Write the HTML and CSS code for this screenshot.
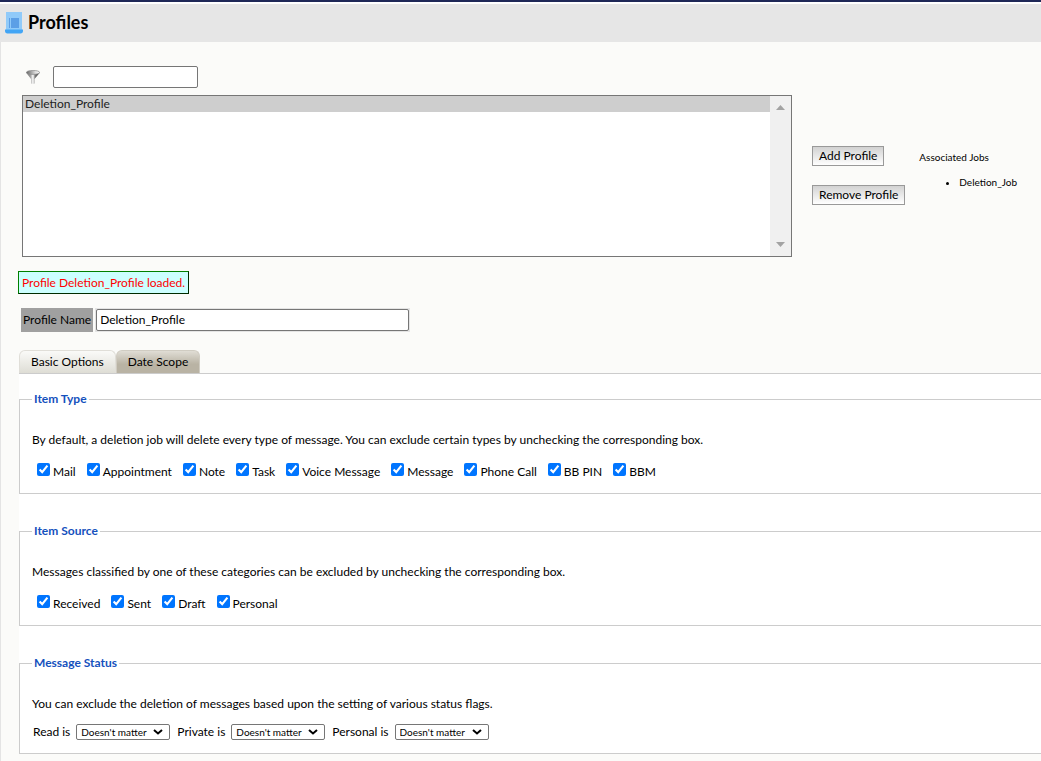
FILE: index.html
```html
<!DOCTYPE html>
<html lang="en">
<head>
<meta charset="utf-8">
<title>Profiles</title>
<link rel="stylesheet" href="styles.css">
</head>
<body>
<header class="page-header">
  <svg class="page-icon" viewBox="0 0 18 22" aria-hidden="true">
    <path fill="#90caf9" d="M1 0h16v18H1z"/>
    <path fill="#5c9fe6" d="M4 6h10v10H4z"/>
    <path fill="#90caf9" d="M5 6h1v10H5z"/>
    <path fill="#42a5f5" d="M0 17.500h18v1.500a2.500 2.500 0 0 1-2 2.500H2A2.500 2.500 0 0 1 0 19z"/>
  </svg>
  <h1 class="page-title">Profiles</h1>
</header>
<main class="page">
  <div class="filter">
    <svg class="filter-icon" viewBox="0 0 14 14" aria-hidden="true">
      <defs>
        <linearGradient id="metal"><stop offset="0" stop-color="#777"/><stop offset=".3" stop-color="#999"/><stop offset=".5" stop-color="#fff"/><stop offset=".65" stop-color="#777"/><stop offset="1" stop-color="#444"/></linearGradient>
        <linearGradient id="bowl"><stop offset="0" stop-color="#666"/><stop offset=".7" stop-color="#ddd"/><stop offset="1" stop-color="#fff"/></linearGradient>
      </defs>
      <path fill="url(#metal)" d="M0 2.500 5 9v4.500q1.800.8 3.500 0V9L14 2.500z"/>
      <ellipse cx="7" cy="2.400" rx="6.600" ry="2" fill="url(#bowl)" stroke="#888" stroke-width=".7"/>
    </svg>
    <input class="filter-input" type="text" aria-label="Filter profiles">
  </div>
  <div class="profiles">
    <div class="listbox">
      <select class="list" size="10" aria-label="Profiles">
        <option selected>Deletion_Profile</option>
      </select>
      <div class="scroll" aria-hidden="true">
        <svg class="arrow" viewBox="0 0 9 5"><path d="M0 5 4.500 0 9 5z"/></svg>
        <svg class="arrow" viewBox="0 0 9 5"><path d="M0 0 4.500 5 9 0z"/></svg>
      </div>
    </div>
    <div class="actions">
      <button class="btn" type="button">Add Profile</button>
      <button class="btn" type="button">Remove Profile</button>
    </div>
    <div class="jobs">
      <p class="jobs-title">Associated Jobs</p>
      <ul class="jobs-list"><li>Deletion_Job</li></ul>
    </div>
  </div>
  <p class="notice" role="status">Profile Deletion_Profile loaded.</p>
  <div class="name-row">
    <label class="name-label" for="name">Profile Name</label>
    <span class="name-field"><input class="name-input" id="name" type="text" value="Deletion_Profile"></span>
  </div>
  <div class="tabs" role="tablist">
    <button class="tab tab-active" type="button" role="tab" aria-selected="true">Basic Options</button>
    <button class="tab" type="button" role="tab" aria-selected="false">Date Scope</button>
  </div>
  <div class="panel" role="tabpanel">
    <fieldset class="group">
      <legend class="legend">Item Type</legend>
      <p class="text">By default, a deletion job will delete every type of message. You can exclude certain types by unchecking the corresponding box.</p>
      <div class="checks">
        <label class="check"><input type="checkbox" checked><span>Mail</span></label>
        <label class="check"><input type="checkbox" checked><span>Appointment</span></label>
        <label class="check"><input type="checkbox" checked><span>Note</span></label>
        <label class="check"><input type="checkbox" checked><span>Task</span></label>
        <label class="check"><input type="checkbox" checked><span>Voice Message</span></label>
        <label class="check"><input type="checkbox" checked><span>Message</span></label>
        <label class="check"><input type="checkbox" checked><span>Phone Call</span></label>
        <label class="check"><input type="checkbox" checked><span>BB PIN</span></label>
        <label class="check"><input type="checkbox" checked><span>BBM</span></label>
      </div>
    </fieldset>
    <fieldset class="group">
      <legend class="legend">Item Source</legend>
      <p class="text">Messages classified by one of these categories can be excluded by unchecking the corresponding box.</p>
      <div class="checks">
        <label class="check"><input type="checkbox" checked><span>Received</span></label>
        <label class="check"><input type="checkbox" checked><span>Sent</span></label>
        <label class="check"><input type="checkbox" checked><span>Draft</span></label>
        <label class="check"><input type="checkbox" checked><span>Personal</span></label>
      </div>
    </fieldset>
    <fieldset class="group">
      <legend class="legend">Message Status</legend>
      <p class="text">You can exclude the deletion of messages based upon the setting of various status flags.</p>
      <div class="flags">
        <label class="flag">Read is <span class="choice"><select class="choice-select"><option>Doesn't matter</option></select><svg class="chevron" viewBox="0 0 10 6" aria-hidden="true"><path d="m1 1 4 3.500L9 1"/></svg></span></label>
        <label class="flag">Private is <span class="choice"><select class="choice-select"><option>Doesn't matter</option></select><svg class="chevron" viewBox="0 0 10 6" aria-hidden="true"><path d="m1 1 4 3.500L9 1"/></svg></span></label>
        <label class="flag">Personal is <span class="choice"><select class="choice-select"><option>Doesn't matter</option></select><svg class="chevron" viewBox="0 0 10 6" aria-hidden="true"><path d="m1 1 4 3.500L9 1"/></svg></span></label>
      </div>
    </fieldset>
  </div>
</main>
</body>
</html>
```
FILE: styles.css
```css
* { box-sizing: border-box; }
body {
  display: flex;
  flex-direction: column;
  min-height: 100vh;
  margin: 0;
  border-top: 2px solid #1f2857;
  background: #fbfbf9;
  color: #000;
  font: 12px/16px Lato, "Liberation Sans", sans-serif;
}
button, input, select { font: inherit; color: inherit; }
p { margin: 0; }
.page-header {
  display: flex;
  align-items: center;
  gap: 5px;
  height: 40px;
  padding-left: 5px;
  border-top: 2px solid #fff;
  background: #e6e6e6;
}
.page-icon { width: 18px; height: 22px; }
.page-title { margin: 0; padding-bottom: 2px; font-size: 18px; line-height: 24px; font-weight: 700; }
.page { flex: 1; padding: 24px 0 0 18px; border-left: 1px solid #e4e4e4; }
.filter { display: flex; align-items: center; gap: 13px; padding-left: 7px; }
.filter-icon { width: 14px; height: 14px; }
.filter-input {
  width: 145px;
  height: 22px;
  padding: 1px 4px;
  border: 1px solid #767676;
  border-radius: 2px;
  background: #fff;
}
.profiles { display: flex; align-items: flex-start; margin-top: 7px; padding-left: 3px; }
.listbox {
  display: flex;
  flex: 0 1 770px;
  height: 162px;
  border: 1px solid #767676;
  background: #fff;
}
.list { flex: 1; min-width: 0; padding: 0; border: 0; border-radius: 0; outline: 0; background: #fff; overflow: hidden; }
.list option { min-height: 16px; padding: 0 2px; line-height: 16px; color: #222; }
.list option:checked { background: linear-gradient(#cecece, #cecece); color: #222; }
.scroll {
  display: flex;
  flex-direction: column;
  justify-content: space-between;
  align-items: center;
  width: 21px;
  padding: 9px 0;
  background: #f0f0f0;
}
.arrow { width: 9px; height: 5px; fill: #a3a3a3; }
.actions { display: flex; flex-direction: column; align-items: flex-start; gap: 19px; margin: 51px 0 0 20px; }
.btn {
  height: 20px;
  padding: 0 6px;
  border: 1px solid #999;
  background: linear-gradient(#d2d2d2, #fff);
  line-height: 16px;
  white-space: nowrap;
}
.jobs { margin: 54px 0 0 14px; font-size: 10px; white-space: nowrap; }
.jobs-list { margin: 9px 0 0; padding-left: 40px; }
.notice {
  width: fit-content;
  margin: 14px 0 0 -1px;
  padding: 3px;
  border: 1px outset green;
  background: #cff;
  color: #f00;
  line-height: 15px;
}
.name-row { display: flex; margin: 14px 0 0 2px; gap: 2px; }
.name-label { height: 24px; padding: 0 2px; background: #a0a0a0; line-height: 24px; }
.name-field { padding: 1px; background: #e4e4e4; }
.name-input {
  display: block;
  width: 313px;
  height: 22px;
  padding: 0 3px 1px;
  border: 1px solid #767676;
  border-radius: 2px;
  background: #fff;
}
.tabs { display: flex; margin-top: 18px; border-bottom: 1px solid #ccc; }
.tab {
  height: 23px;
  padding: 0 11px;
  border: 1px solid #d0ccc2;
  border-bottom: 0;
  border-radius: 6px 6px 0 0;
  background: linear-gradient(#e0ddd5, #b9b3a4 60%);
}
.tab-active { border-color: #e0ded8; background: linear-gradient(#fafaf8, #deddd5); }
.panel { display: flex; flex-direction: column; gap: 29px; padding-top: 17px; background: #fff; }
.group {
  min-width: 0;
  margin: 0;
  padding: 25px 12px 13px;
  border: 1px solid #ccc;
  border-right: 0;
}
.legend { padding: 0 2px; color: #1551bd; font-weight: 700; line-height: 16px; }
.checks, .flags { display: flex; flex-wrap: wrap; }
.checks { gap: 10px; margin-top: 14px; padding-left: 5px; }
.check { display: flex; align-items: flex-start; gap: 3px; }
.check + .check { padding-left: 1px; }
.check input { width: 13px; height: 13px; margin: 1px 0 0; }
.check span { padding-top: 2px; }
.flags { gap: 7px; margin-top: 12px; padding-left: 1px; }
.flag { display: flex; align-items: center; gap: 6px; }
.choice { display: grid; align-items: center; width: 94px; }
.choice-select {
  grid-area: 1 / 1;
  width: 100%;
  height: 16px;
  padding: 0 4px;
  border: 1px solid #767676;
  border-radius: 2px;
  background: #fff;
  font-size: 10px;
  line-height: 14px;
  appearance: none;
}
.chevron {
  grid-area: 1 / 1;
  justify-self: end;
  width: 10px;
  height: 6px;
  margin-right: 7px;
  fill: none;
  stroke: #000;
  stroke-width: 2;
  pointer-events: none;
}
```
